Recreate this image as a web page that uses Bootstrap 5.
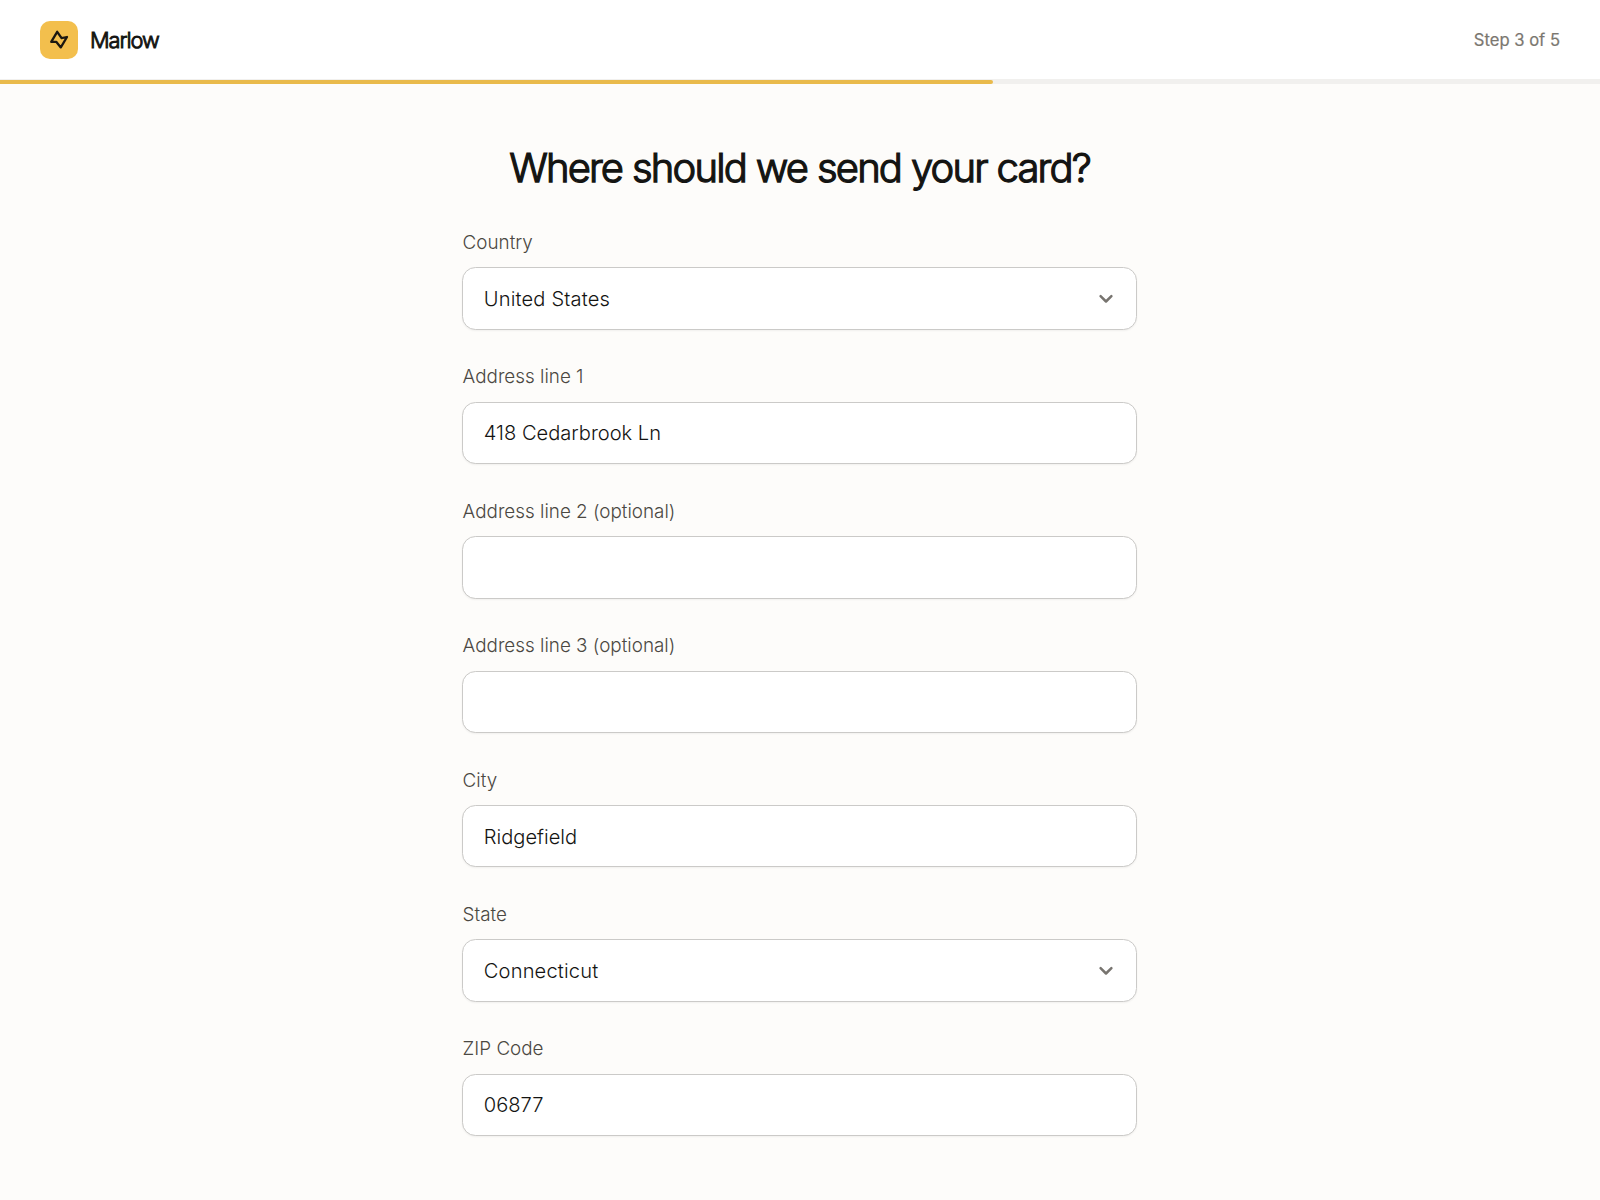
<!DOCTYPE html>
<html lang="en">
<head>
<meta charset="utf-8">
<meta name="viewport" content="width=device-width, initial-scale=1">
<title>Marlow</title>
<link href="https://cdn.jsdelivr.net/npm/bootstrap@5.3.0/dist/css/bootstrap.min.css" rel="stylesheet">
<style>
  body {
    background: #fdfcfa;
    color: #141412;
    font-family: Inter, "Liberation Sans", sans-serif;
    overflow: hidden;
  }
  .topbar { height: 79px; padding: 1px 40px 0; background: #fff; }
  .brand-tile { width: 38px; height: 38px; border-radius: 10px; background: #f3bf4d; }
  .brand-name { font-size: 21.8px; font-weight: 300; letter-spacing: -1.05px; line-height: 1; padding-top: 2px; -webkit-text-stroke: .9px #141412; }
  .step-count { font-size: 16.6px; font-weight: 400; letter-spacing: 0; color: #7b7770; line-height: 1; padding-top: 1.5px; -webkit-text-stroke: .2px #7b7770; }
  .step-progress { height: 5px; border-radius: 0; background: #f1f0ee; }
  .step-progress .progress-bar { background: #e9ba4b; border-radius: 0 2px 2px 0; height: 4px; margin-top: 1px; }
  .form-column { width: 676px; padding: 59px 1px 0 0; }
  .page-title { font-size: 40px; font-weight: 300; letter-spacing: -1.85px; word-spacing: .5px; line-height: 50px; margin-bottom: 36px; white-space: nowrap; -webkit-text-stroke: 1.25px #141412; }
  .field { height: 134.4px; }
  .field .form-label { display: block; font-size: 18.85px; font-weight: 300; color: #4b4842; line-height: 28px; padding-left: .6px; margin-bottom: 10.4px; }
  .field .form-control, .field .form-select {
    height: 62.5px;
    padding: 0 20.8px;
    border: 1.4px solid #cbcac8;
    border-radius: 13.5px;
    background-color: #fff;
    color: #141412;
    font-size: 20.1px;
    font-weight: 300;
    letter-spacing: 0;
    box-shadow: 0 1px 2px rgba(0, 0, 0, .05);
  }
  .field .form-control { padding-top: .6px; }
  .field .form-select {
    padding-right: 60px;
    letter-spacing: .16px;
    background-image: url("data:image/svg+xml,%3Csvg xmlns='http://www.w3.org/2000/svg' viewBox='0 0 20 20'%3E%3Cpath d='M4.6 7.1 10 12.5 15.4 7.1' fill='none' stroke='%2377746f' stroke-width='2.5' stroke-linecap='round' stroke-linejoin='round'/%3E%3C/svg%3E");
    background-size: 20px 20px;
    background-position: right 20px center;
  }
</style>
</head>
<body>
<header>
  <div class="topbar d-flex align-items-center justify-content-between">
    <div class="d-flex align-items-center gap-2">
      <span class="brand-tile d-flex align-items-center justify-content-center me-1">
        <svg width="20" height="20" viewBox="0 0 20 20" fill="none" stroke="#1b1710" stroke-width="2.3" stroke-linejoin="round" stroke-linecap="round" aria-hidden="true">
          <path d="M8.2 1.8 2.2 11.8H7.2L11.8 17.4 18 7 12.6 8.2Z"/>
        </svg>
      </span>
      <span class="brand-name">Marlow</span>
    </div>
    <span class="step-count">Step 3 of 5</span>
  </div>
  <div class="progress step-progress" role="progressbar" aria-valuenow="62" aria-valuemin="0" aria-valuemax="100">
    <div class="progress-bar" style="width:62.05%"></div>
  </div>
</header>
<main class="form-column mx-auto">
  <h1 class="page-title text-center">Where should we send your card?</h1>
  <form>
    <div class="field"><label class="form-label" for="country">Country</label>
      <select class="form-select" id="country"><option>United States</option></select></div>
    <div class="field"><label class="form-label" for="line1">Address line 1</label>
      <input class="form-control" id="line1" value="418 Cedarbrook Ln"></div>
    <div class="field"><label class="form-label" for="line2">Address line 2 (optional)</label>
      <input class="form-control" id="line2"></div>
    <div class="field"><label class="form-label" for="line3">Address line 3 (optional)</label>
      <input class="form-control" id="line3"></div>
    <div class="field"><label class="form-label" for="city">City</label>
      <input class="form-control" id="city" value="Ridgefield"></div>
    <div class="field"><label class="form-label" for="state">State</label>
      <select class="form-select" id="state"><option>Connecticut</option></select></div>
    <div class="field"><label class="form-label" for="zip">ZIP Code</label>
      <input class="form-control" id="zip" value="06877"></div>
  </form>
</main>
<script src="https://cdn.jsdelivr.net/npm/bootstrap@5.3.0/dist/js/bootstrap.bundle.min.js"></script>
</body>
</html>
